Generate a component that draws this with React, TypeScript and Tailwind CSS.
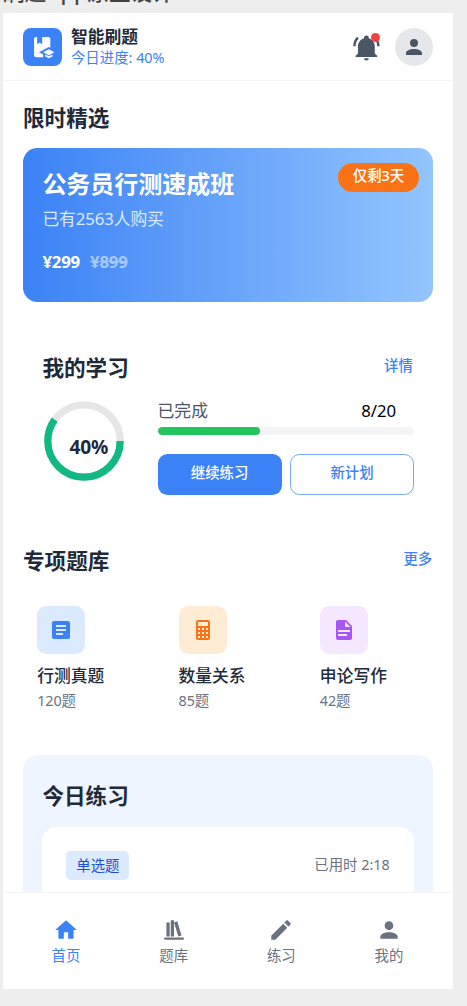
import type { ReactNode } from 'react';

const ICONS = {
  book: 'M8.82 17L13 19.28V22H6c-1.11 0-2-.89-2-2V4a2 2 0 0 1 2-2h1v7l2.5-1.5L12 9V2h6c1.1 0 2 .9 2 2v8.54L18.5 11.72L8.82 17M24 17l-5.5-3L13 17l5.5 3L24 17m-9 2.09v2L18.5 23l3.5-1.91v-2L18.5 21L15 19.09',
  bell: 'M21 19v1H3v-1l2-2v-6c0-3.1 2.03-5.83 5-6.71V4a2 2 0 0 1 2-2a2 2 0 0 1 2 2v.29c2.97.88 5 3.61 5 6.71v6zm-7 2a2 2 0 0 1-2 2a2 2 0 0 1-2-2m9.75-17.81l-1.42 1.42A8.98 8.98 0 0 1 21 11h2c0-2.93-1.16-5.75-3.25-7.81M1 11h2c0-2.4.96-4.7 2.67-6.39L4.25 3.19A10.97 10.97 0 0 0 1 11',
  account: 'M12 4a4 4 0 0 1 4 4a4 4 0 0 1-4 4a4 4 0 0 1-4-4a4 4 0 0 1 4-4m0 10c4.42 0 8 1.79 8 4v2H4v-2c0-2.21 3.58-4 8-4',
  textBox: 'M14 17H7v-2h7m3-2H7v-2h10m0-2H7V7h10m2-4H5c-1.11 0-2 .89-2 2v14a2 2 0 0 0 2 2h14a2 2 0 0 0 2-2V5a2 2 0 0 0-2-2',
  calculator: 'M7 2h10a2 2 0 0 1 2 2v16a2 2 0 0 1-2 2H7a2 2 0 0 1-2-2V4a2 2 0 0 1 2-2m0 2v4h10V4zm0 6v2h2v-2zm4 0v2h2v-2zm4 0v2h2v-2zm-8 4v2h2v-2zm4 0v2h2v-2zm4 0v2h2v-2zm-8 4v2h2v-2zm4 0v2h2v-2zm4 0v2h2v-2z',
  file: 'M13 9h5.5L13 3.5zM6 2h8l6 6v12a2 2 0 0 1-2 2H6a2 2 0 0 1-2-2V4c0-1.11.89-2 2-2m9 16v-2H6v2zm3-4v-2H6v2z',
  home: 'M10 20v-6h4v6h5v-8h3L12 3L2 12h3v8z',
  shelf: 'M9 3v15h3V3zm3 2l4 13l3-1l-4-13zM5 5v13h3V5zM3 19v2h18v-2z',
  pencil: 'M20.71 7.04c.39-.39.39-1.04 0-1.41l-2.34-2.34c-.37-.39-1.02-.39-1.41 0l-1.84 1.83l3.75 3.75M3 17.25V21h3.75L17.81 9.93l-3.75-3.75z',
};

function Icon({ name, className }: { name: keyof typeof ICONS; className: string }) {
  return (
    <svg viewBox="0 0 24 24" fill="currentColor" className={className}>
      <path d={ICONS[name]} />
    </svg>
  );
}

function Heading({ children }: { children: ReactNode }) {
  return <h2 className="text-[21.6px] leading-[34px] font-bold text-gray-800">{children}</h2>;
}

const BANKS = [
  { icon: 'textBox', title: '行测真题', count: '120题', tone: 'bg-blue-100 text-[#3b82f6]' },
  { icon: 'calculator', title: '数量关系', count: '85题', tone: 'bg-[#ffecd5] text-[#f97316]' },
  { icon: 'file', title: '申论写作', count: '42题', tone: 'bg-purple-100 text-[#a855f7]' },
] as const;

const TABS = [
  { icon: 'home', label: '首页', tone: 'text-[#3b82f6]' },
  { icon: 'shelf', label: '题库', tone: 'text-gray-500' },
  { icon: 'pencil', label: '练习', tone: 'text-gray-500' },
  { icon: 'account', label: '我的', tone: 'text-gray-500' },
] as const;

export default function App() {
  return (
    <div className="flex h-[1006px] w-[467px] flex-col overflow-hidden bg-[#eeeeee] pl-[3.2px] font-['Noto_Sans','Noto_Sans_CJK_SC',sans-serif]">
      <div className="flex h-[13px] shrink-0 items-end">
        <p className="-mt-[30px] mb-[6px] text-[21.6px] leading-[30px] font-medium text-[#444444]">刷题App原型设计</p>
      </div>
      <div className="flex h-[976px] w-[449.6px] shrink-0 flex-col overflow-hidden bg-white">
        <header className="flex h-[68px] shrink-0 items-center justify-between border-b border-gray-100 pt-[1px] pr-[19.4px] pl-[19.8px]">
          <div className="flex items-center gap-[9.2px]">
            <div className="flex size-[38.8px] items-center justify-center rounded-[8px] bg-[#3b82f6] text-white">
              <Icon name="book" className="size-[24.4px]" />
            </div>
            <div className="-mt-[1px]">
              <h1 className="text-[16.8px] leading-[21px] font-bold text-gray-800">智能刷题</h1>
              <p className="text-[14.4px] leading-[21px] text-[#3b82f6]">今日进度: 40%</p>
            </div>
          </div>
          <div className="flex items-center gap-[14.2px]">
            <div className="relative text-gray-600">
              <Icon name="bell" className="size-[28.8px]" />
              <span className="absolute top-0 right-0 size-[9.6px] rounded-full bg-[#ef4444]" />
            </div>
            <div className="flex size-[38.8px] items-center justify-center rounded-full bg-gray-200 text-gray-600">
              <Icon name="account" className="size-6" />
            </div>
          </div>
        </header>

        <main className="flex min-h-0 flex-1 flex-col overflow-hidden pt-5 pr-[19.6px] pl-[19.8px]">
          <Heading>限时精选</Heading>
          <section className="mt-[13.3px] flex h-[153.7px] shrink-0 items-start justify-between rounded-[14.4px] bg-linear-to-r/srgb from-[#3b82f6] to-[#93c5fd] pt-[14.4px] pr-[14.2px] pl-[19.4px]">
            <div className="pt-[4.3px]">
              <h3 className="text-[24px] leading-[34px] font-bold text-white">公务员行测速成班</h3>
              <p className="mt-[6px] text-[16.8px] leading-6 tracking-[-0.1px] text-blue-100">已有2563人购买</p>
              <div className="mt-[18.8px] flex gap-[10px] text-[16.8px] leading-6 font-bold tracking-[-0.2px]">
                <span className="text-white">¥299</span>
                <span className="text-[#a9c9fd] line-through">¥899</span>
              </div>
            </div>
            <span className="flex h-[29px] w-[81px] items-center justify-center rounded-full bg-[#f97316] pb-[2px] text-[14.4px] font-medium text-white">仅剩3天</span>
          </section>

          <section className="mt-[48.6px] shrink-0 px-[19.4px]">
            <div className="flex items-start justify-between">
              <Heading>我的学习</Heading>
              <span className="pt-[4px] pr-[1px] text-[14.4px] leading-[21px] font-medium text-[#3b82f6]">详情</span>
            </div>
            <div className="mt-[12px] flex">
              <div className="relative mt-[2.2px] size-[84px] shrink-0">
                <svg viewBox="0 0 84 84" className="size-full" fill="none" strokeWidth="7.2">
                  <circle cx="42" cy="42" r="36.2" stroke="#e6e6e6" />
                  <circle cx="42" cy="42" r="36.2" stroke="#10b981" pathLength="100" strokeDasharray="60 40" />
                </svg>
                <span className="absolute top-[36.5px] left-[27.2px] text-[19.2px] leading-6 font-bold tracking-[-0.2px] text-gray-800">40%</span>
              </div>
              <div className="ml-[31.2px] flex-1 pt-[2px]">
                <div className="flex justify-between pr-[17.6px] text-[16.8px] leading-6">
                  <span className="text-gray-600">已完成</span>
                  <span className="text-black">8/20</span>
                </div>
                <div className="mt-[4.6px] h-[7.6px] overflow-hidden rounded-full bg-gray-100">
                  <div className="h-full w-2/5 rounded-full bg-[#22c55e]" />
                </div>
                <div className="mt-[19px] flex gap-[8.6px]">
                  <button className="h-[40.8px] w-[124px] rounded-[9.6px] bg-[#3b82f6] pb-[3px] text-[14.4px] font-medium text-white">继续练习</button>
                  <button className="h-[40.8px] flex-1 rounded-[9.6px] border border-[#77a8f8] pb-[3px] text-[14.4px] font-medium text-[#3b82f6]">新计划</button>
                </div>
              </div>
            </div>
          </section>

          <section className="mt-[49.2px] shrink-0">
            <div className="flex items-start justify-between">
              <Heading>专项题库</Heading>
              <span className="pt-[4px] pr-[1px] text-[14.4px] leading-[21px] font-medium text-[#3b82f6]">更多</span>
            </div>
            <div className="mt-[28px] grid grid-cols-3 gap-[13.8px]">
              {BANKS.map((bank) => (
                <div key={bank.title} className="pl-[14.2px]">
                  <div className={`flex size-12 items-center justify-center rounded-[9.6px] ${bank.tone}`}>
                    <Icon name={bank.icon} className="size-6" />
                  </div>
                  <h3 className="mt-[10px] text-[16.8px] leading-6 font-medium text-gray-800">{bank.title}</h3>
                  <p className="mt-[2px] text-[14.4px] leading-[22px] tracking-[-0.1px] text-gray-500">{bank.count}</p>
                </div>
              ))}
            </div>
          </section>

          <section className="mt-[43.2px] h-[230px] shrink-0 rounded-[14.4px] bg-[#eef5ff] px-[19.4px] pt-[24px]">
            <Heading>今日练习</Heading>
            <div className="mt-[14.4px] flex h-[140px] items-start justify-between rounded-[14.4px] bg-white p-[24px]">
              <span className="flex h-[29px] w-[63px] items-center justify-center rounded-[4.8px] bg-blue-100 pb-[1px] text-[14.4px] text-[#1d4ed8]">单选题</span>
              <span className="pt-[3px] text-[14.4px] leading-[22px] text-gray-500">已用时 2:18</span>
            </div>
          </section>
        </main>

        <nav className="grid h-[97px] shrink-0 grid-cols-4 border-t border-gray-100 bg-white pt-[24px] pr-[10px] pl-[9px]">
          {TABS.map((tab) => (
            <div key={tab.label} className={`flex flex-col items-center ${tab.tone}`}>
              <Icon name={tab.icon} className="size-[26px]" />
              <span className="mt-[2px] text-[14.4px] leading-[22px]">{tab.label}</span>
            </div>
          ))}
        </nav>
      </div>
    </div>
  );
}
